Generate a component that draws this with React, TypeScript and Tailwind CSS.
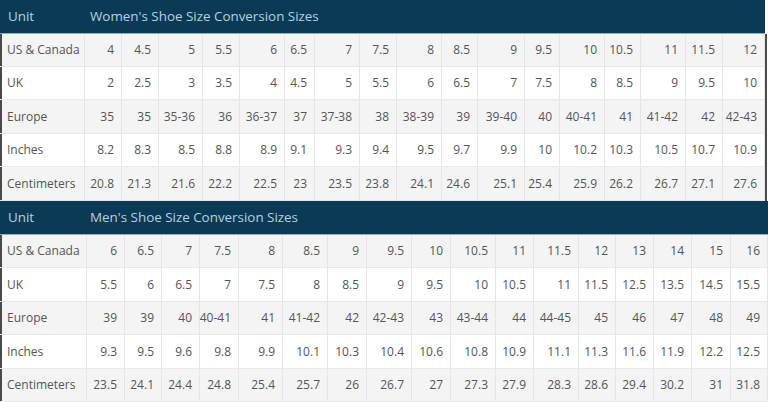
import React from 'react';

interface SizeTable {
    title: string;
    gridCols: string;
    rowHeights: string[];
    rows: { unit: string; values: string[] }[];
}

const women: SizeTable = {
    title: "Women's Shoe Size Conversion Sizes",
    gridCols: 'grid-cols-[85px_37px_37px_44px_37px_45px_30px_45px_37px_45px_36px_47px_35px_45px_36px_45px_37px_42px]',
    rowHeights: ['h-[33px]', 'h-[33px]', 'h-[34px]', 'h-[33px]', 'h-[34px]'],
    rows: [
        { unit: 'US & Canada', values: ['4', '4.5', '5', '5.5', '6', '6.5', '7', '7.5', '8', '8.5', '9', '9.5', '10', '10.5', '11', '11.5', '12'] },
        { unit: 'UK', values: ['2', '2.5', '3', '3.5', '4', '4.5', '5', '5.5', '6', '6.5', '7', '7.5', '8', '8.5', '9', '9.5', '10'] },
        { unit: 'Europe', values: ['35', '35', '35-36', '36', '36-37', '37', '37-38', '38', '38-39', '39', '39-40', '40', '40-41', '41', '41-42', '42', '42-43'] },
        { unit: 'Inches', values: ['8.2', '8.3', '8.5', '8.8', '8.9', '9.1', '9.3', '9.4', '9.5', '9.7', '9.9', '10', '10.2', '10.3', '10.5', '10.7', '10.9'] },
        { unit: 'Centimeters', values: ['20.8', '21.3', '21.6', '22.2', '22.5', '23', '23.5', '23.8', '24.1', '24.6', '25.1', '25.4', '25.9', '26.2', '26.7', '27.1', '27.6'] },
    ],
};

const men: SizeTable = {
    title: "Men's Shoe Size Conversion Sizes",
    gridCols: 'grid-cols-[87px_38px_37px_38px_39px_44px_45px_39px_45px_39px_45px_38px_45px_37px_38px_38px_39px_37px]',
    rowHeights: ['h-[33px]', 'h-[34px]', 'h-[33px]', 'h-[34px]', 'h-[33px]'],
    rows: [
        { unit: 'US & Canada', values: ['6', '6.5', '7', '7.5', '8', '8.5', '9', '9.5', '10', '10.5', '11', '11.5', '12', '13', '14', '15', '16'] },
        { unit: 'UK', values: ['5.5', '6', '6.5', '7', '7.5', '8', '8.5', '9', '9.5', '10', '10.5', '11', '11.5', '12.5', '13.5', '14.5', '15.5'] },
        { unit: 'Europe', values: ['39', '39', '40', '40-41', '41', '41-42', '42', '42-43', '43', '43-44', '44', '44-45', '45', '46', '47', '48', '49'] },
        { unit: 'Inches', values: ['9.3', '9.5', '9.6', '9.8', '9.9', '10.1', '10.3', '10.4', '10.6', '10.8', '10.9', '11.1', '11.3', '11.6', '11.9', '12.2', '12.5'] },
        { unit: 'Centimeters', values: ['23.5', '24.1', '24.4', '24.8', '25.4', '25.7', '26', '26.7', '27', '27.3', '27.9', '28.3', '28.6', '29.4', '30.2', '31', '31.8'] },
    ],
};

function ConversionTable({ table, widthClass }: { table: SizeTable; widthClass: string }) {
    return (
        <div className={`${widthClass} text-[12px] text-[#555555]`}>
            {/* Header */}
            <div className="flex h-[34px] items-center bg-[#0b3a56] border-b border-[#8fb1c6] text-[13.4px] text-[#b8d1e1]">
                <div className="w-[85px] pl-[8px]">Unit</div>
                <div className="pl-[5px]">{table.title}</div>
            </div>

            {/* Rows */}
            {table.rows.map((row, i) => (
                <div
                    key={row.unit}
                    className={`grid ${table.gridCols} ${table.rowHeights[i]} ${i % 2 === 0 ? 'bg-[#f4f4f4]' : 'bg-white'} border-b border-[#e9e9e9]`}
                >
                    <div className="flex items-center pl-[7px] border-r border-[#e6e6e6] shadow-[inset_2px_0_0_#4a4a4a] whitespace-nowrap">
                        {row.unit}
                    </div>
                    {row.values.map((v, j) => (
                        <div key={j} className="flex items-center justify-end pr-[7px] border-r border-[#e6e6e6] whitespace-nowrap">
                            {v}
                        </div>
                    ))}
                </div>
            ))}
        </div>
    );
}

export default function App() {
    return (
        <div className="w-[768px] h-[402px] overflow-hidden bg-white" style={{ fontFamily: '"Open Sans", "Noto Sans", sans-serif' }}>
            <div className="flex">
                <ConversionTable table={women} widthClass="w-[765px]" />
                <div className="w-[2px] bg-[#4a4a4a] mt-[34px]" />
            </div>
            <ConversionTable table={men} widthClass="w-[768px]" />
        </div>
    );
}
